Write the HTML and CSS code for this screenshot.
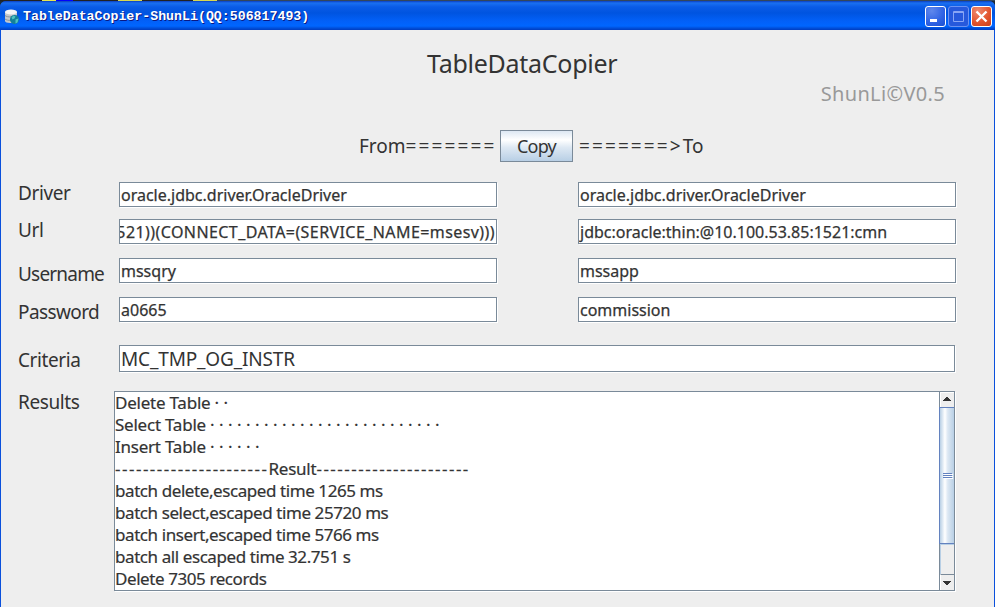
FILE: index.html
```html
<!DOCTYPE html>
<html lang="en">
<head>
<meta charset="utf-8">
<title>TableDataCopier</title>
<link rel="stylesheet" href="styles.css">
</head>
<body>
<div class="desktop"></div>
<div class="window">
  <header class="titlebar">
    <svg class="app-icon" width="15" height="16" viewBox="0 0 15 16">
      <path d="M0 3v9c0 1 2 2 5 2s7-1 7-2V3z" fill="#c4c8cc"/>
      <path d="M0 6.500c2 2 10 2 12 0M0 10c2 2 10 2 12 0" stroke="#8c9499" fill="none"/>
      <ellipse cx="6" cy="3" rx="6" ry="2.400" fill="#f5f5f5"/>
      <circle cx="9.500" cy="10.500" r="4.500" fill="#148099"/>
      <path d="M6.500 8.500l2-2 2 1-1 2-2 1zM10.500 10.500l3-1-1 4-2 1z" fill="#4fc3c0"/>
    </svg>
    <span class="caption">TableDataCopier-ShunLi(QQ:506817493)</span>
    <div class="controls">
      <span class="ctl ctl-min"><svg width="19" height="19"><path d="M4 12h7v3H4z" fill="#fff"/></svg></span>
      <span class="ctl ctl-max"><svg width="19" height="19"><path d="M4.500 4.500h10v10h-10zM4 5.500h11" fill="none" stroke="#88a5f4"/></svg></span>
      <span class="ctl ctl-close"><svg width="19" height="19"><path d="M4.500 4.500l10 10M14.500 4.500l-10 10" stroke="#fff" stroke-width="2.400"/></svg></span>
    </div>
  </header>
  <main class="pane">
    <h1 class="title">TableDataCopier</h1>
    <div class="version">ShunLi©V0.5</div>
    <div class="transfer">
      <span class="from">From<i class="rule">=======</i></span>
      <button class="copy">Copy</button>
      <span class="to"><i class="rule">=======&gt;</i>To</span>
    </div>
    <div class="row driver"><label>Driver</label><div class="field">oracle.jdbc.driver.OracleDriver</div><div class="field">oracle.jdbc.driver.OracleDriver</div></div>
    <div class="row url"><label>Url</label><div class="field tail"><span>521))(CONNECT_DATA=(SERVICE_NAME=msesv)))</span></div><div class="field">jdbc:oracle:thin:@10.100.53.85:1521:cmn</div></div>
    <div class="row user"><label>Username</label><div class="field">mssqry</div><div class="field">mssapp</div></div>
    <div class="row pass"><label>Password</label><div class="field">a0665</div><div class="field">commission</div></div>
    <div class="row criteria"><label>Criteria</label><div class="field wide">MC_TMP_OG_INSTR</div></div>
    <div class="row results"><label>Results</label>
      <div class="output">
        <div class="log">
          <p>Delete Table <i class="dots">··</i></p>
          <p>Select Table <i class="dots">··························</i></p>
          <p>Insert Table <i class="dots">······</i></p>
          <p><i class="dash">----------------------</i>Result<i class="dash">----------------------</i></p>
          <p class="timing">batch delete,escaped time 1265 ms</p>
          <p class="timing">batch select,escaped time 25720 ms</p>
          <p class="timing">batch insert,escaped time 5766 ms</p>
          <p class="timing">batch all escaped time 32.751 s</p>
          <p class="timing">Delete 7305 records</p>
        </div>
        <div class="scrollbar">
          <div class="arrow"><svg width="14" height="15"><path d="M6 4h2v1h1v1h1v1h1v1H3V7h1V6h1V5h1z" fill="#333"/></svg></div>
          <div class="thumb"><i></i><i></i><i></i></div>
          <div class="track"></div>
          <div class="arrow down"><svg width="14" height="15"><path d="M3 6h8v1h-1v1H9v1H8v1H6V9H5V8H4V7H3z" fill="#333"/></svg></div>
        </div>
      </div>
    </div>
  </main>
</div>
</body>
</html>
```
FILE: styles.css
```css
* { box-sizing: border-box; }
html, body { margin: 0; height: 100%; overflow: hidden; }
body {
  display: flex;
  flex-direction: column;
  background: #1d2a38;
  font-family: "Noto Sans", sans-serif;
  color: #333;
}
i { font-style: normal; }
.desktop { height: 1px; flex: none; background: linear-gradient(90deg, #222 0 42px, #e6e650 42px 56px, #00f 56px 73px, #222 73px 118px, #d8d850 118px 142px, #222 142px 193px, #d8d850 193px 217px, #34465a 217px); }
.window {
  flex: 1;
  min-height: 0;
  display: flex;
  flex-direction: column;
  border-radius: 6px 6px 0 0;
  overflow: hidden;
  background: #0a50dc;
}
.titlebar {
  height: 29px;
  flex: none;
  display: flex;
  align-items: center;
  padding: 2px 3px 0 5px;
  background: linear-gradient(#0b3fc0 0, #1a70f0 2px, #0a5be6 6px, #0054e0 12px, #0260f8 20px, #0066ff 25px, #0050dc 27px, #003cc0 29px);
}
.caption {
  margin-left: 3px;
  font: bold 13.250px/16px "Liberation Mono", monospace;
  color: #fff;
  text-shadow: 1px 1px #0a1883;
  white-space: nowrap;
}
.controls { margin-left: auto; display: flex; gap: 2px; }
.ctl {
  width: 21px;
  height: 21px;
  border: 1px solid #fff;
  border-radius: 3px;
  background: radial-gradient(circle at 30% 20%, #6088ec, #2e62e4 60%, #1c4fd0);
}
.ctl svg { display: block; }
.ctl-max { border-color: #6b92f2; background: #2759dc; }
.ctl-close { background: radial-gradient(circle at 30% 20%, #ee8a70, #e2532c 60%, #c8401c); }
.pane {
  flex: 1;
  min-height: 0;
  margin: 0 1px;
  background: #eee;
  overflow: hidden;
}
.title {
  margin: 0;
  padding: 15px 0 1px 426px;
  font-weight: 400;
  font-size: 25px;
  line-height: 36px;
  letter-spacing: -0.270px;
}
.version {
  padding-right: 49px;
  text-align: right;
  font-size: 20px;
  line-height: 24px;
  letter-spacing: 0.340px;
  color: #999;
}
.transfer {
  display: flex;
  align-items: center;
  margin-top: 24px;
  height: 32px;
  padding-left: 358px;
  font-size: 19px;
  white-space: nowrap;
}
.from { width: 141px; }
.to { margin-left: 6px; }
.rule { letter-spacing: 2.100px; }
.copy {
  width: 73px;
  height: 32px;
  padding: 0;
  border: 1px solid #7a8a99;
  background: linear-gradient(#dde8f3 0, #fff 30%, #dde8f3 55%, #b8cfe5);
  color: #333;
  font: 18px "Noto Sans", sans-serif;
  letter-spacing: -0.800px;
}
.row {
  display: grid;
  grid-template-columns: 101px 378px 81px 378px;
  align-items: start;
  padding-left: 17px;
}
.row .field:nth-child(3) { grid-column: 4; }
.row .wide { grid-column: 2 / 5; width: 836px; }
label { font-size: 19px; line-height: 24px; letter-spacing: -0.400px; white-space: nowrap; }
.field {
  height: 25px;
  border: 1px solid #7a8a99;
  padding-left: 1px;
  background: #fff;
  box-shadow: 1px 1px #fff;
  font-size: 16px;
  line-height: 25px;
  -webkit-text-stroke: 0.250px #333;
  white-space: nowrap;
  overflow: hidden;
}
.tail {
  display: flex;
  justify-content: flex-end;
  padding: 0 1px 0 0;
  letter-spacing: 0.420px;
}
.driver { margin-top: 20px; height: 37px; }
.url { height: 39px; }
.user { height: 39px; }
.pass { height: 48px; }
.user label { padding-top: 4px; letter-spacing: -0.800px; }
.pass label { padding-top: 3px; letter-spacing: -0.600px; }
.criteria { height: 46px; }
.criteria label { padding-top: 3px; }
.driver label, .url label, .results label { margin-top: -1px; }
.row .wide { height: 27px; font-size: 19px; line-height: 26px; letter-spacing: -0.150px; -webkit-text-stroke: 0; }
.results { grid-template-columns: 96px 841px; }
.output {
  height: 200px;
  display: flex;
  border: 1px solid #7a8a99;
  background: #fff;
  box-shadow: 1px 1px #fff;
}
.log { flex: 1; font-size: 17px; line-height: 22px; letter-spacing: -0.230px; -webkit-text-stroke: 0.200px #333; white-space: nowrap; overflow: hidden; }
.log p { margin: 0; height: 22px; }
.log .timing { letter-spacing: -0.420px; }
.dots { letter-spacing: 4.440px; }
.dash { letter-spacing: 1.500px; }
.scrollbar {
  width: 15px;
  display: flex;
  flex-direction: column;
  border-left: 1px solid #7a8a99;
  background: #eee;
}
.arrow { height: 15px; border: solid #fff; border-width: 1px 0 0 1px; }
.arrow svg { display: block; margin-left: -1px; }
.thumb {
  height: 137px;
  display: flex;
  flex-direction: column;
  align-items: center;
  justify-content: center;
  gap: 1px;
  margin-left: -1px;
  border: 1px solid #6382bf;
  border-right: 0;
  background: linear-gradient(90deg, #b8cfe5 0, #fff 35%, #dde8f3 55%, #b8cfe5);
}
.thumb i { width: 9px; height: 1px; background: #6382bf; box-shadow: 1px 1px #fff; }
.track { flex: 1; border-left: 1px solid #b8cfe5; border-top: 1px solid #b8cfe5; }
.down { height: 16px; border-top: 1px solid #7a8a99; }
```
